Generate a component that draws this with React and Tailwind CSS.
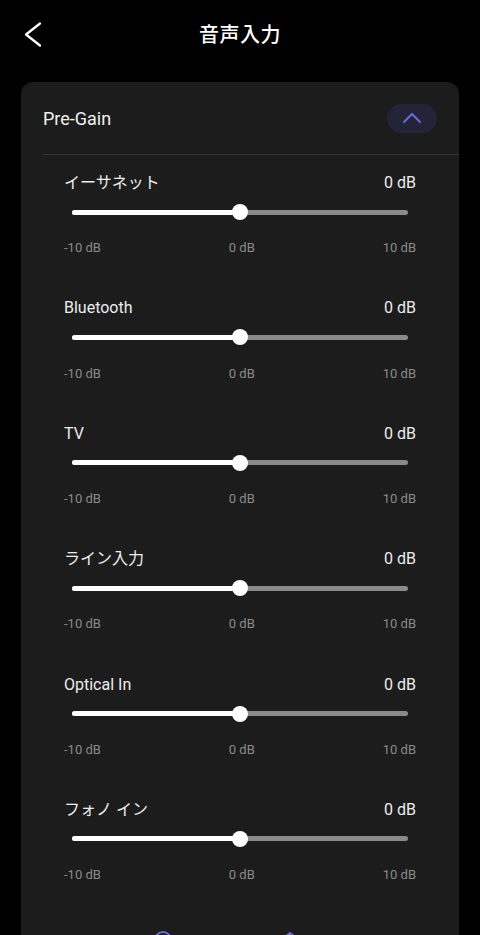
const inputs = ['イーサネット', 'Bluetooth', 'TV', 'ライン入力', 'Optical In', 'フォノ イン'];

function GainRow({ label, value = 0 }) {
    // value in dB, -10..10
    const pct = ((value + 10) / 20) * 100;
    return (
        <div className="pb-[40.4px]">
            <div className="flex h-6 items-center justify-between text-[16px] text-[#ececec]">
                <span>{label}</span>
                <span>{value} dB</span>
            </div>
            <div className="relative mx-2 h-[34px]">
                <div className="absolute left-0 right-0 top-[14.5px] h-[5px] rounded-full bg-[#8a8a8a]" />
                <div
                    className="absolute left-0 top-[14.5px] h-[5px] rounded-full bg-white"
                    style={{ width: `${pct}%` }}
                />
                <div
                    className="absolute top-[9px] h-4 w-4 -translate-x-1/2 rounded-full bg-white"
                    style={{ left: `${pct}%` }}
                />
            </div>
            <div className="mt-[11px] flex h-4 items-center justify-between text-[13px] text-[#8a8a8a]">
                <span>-10 dB</span>
                <span>0 dB</span>
                <span>10 dB</span>
            </div>
        </div>
    );
}

export default function App() {
    return (
        <div
            className="min-h-screen bg-black text-white"
            style={{ fontFamily: 'Roboto, "Noto Sans CJK JP", sans-serif' }}
        >
            {/* Header */}
            <div className="relative flex h-[70px] items-center justify-center">
                <button className="absolute left-[22px] top-[21px] text-white">
                    <svg width="22" height="28" viewBox="0 0 22 28" fill="none">
                        <polyline
                            points="18,2.5 4,13.5 18,24.5"
                            stroke="currentColor"
                            strokeWidth="2.3"
                            strokeLinecap="round"
                            strokeLinejoin="round"
                        />
                    </svg>
                </button>
                <h1 className="text-[20px] font-medium tracking-wide">音声入力</h1>
            </div>

            {/* Card */}
            <div className="mx-[21px] mt-3 overflow-hidden rounded-xl bg-[#1c1c1c]">
                <div className="flex h-[72px] items-center justify-between px-[22px]">
                    <span className="text-[18px] text-[#f0f0f0]">Pre-Gain</span>
                    <button className="flex h-[29px] w-[50px] items-center justify-center rounded-full bg-[#23233a] text-[#6b6bd8]">
                        <svg width="20" height="12" viewBox="0 0 20 12" fill="none">
                            <polyline
                                points="2,10 10,2 18,10"
                                stroke="currentColor"
                                strokeWidth="2"
                                strokeLinecap="round"
                                strokeLinejoin="round"
                            />
                        </svg>
                    </button>
                </div>
                <div className="ml-[22px] border-t border-[#333333]" />

                <div className="px-[43px] pt-[16px]">
                    {inputs.map((name) => (
                        <GainRow key={name} label={name} />
                    ))}
                </div>

                <div className="flex items-start pb-6 pt-2 text-[#6b6bd8]">
                    <div className="ml-[133px] h-[18px] w-[18px] rounded-full border-2 border-[#6b6bd8]" />
                    <svg className="ml-[110px]" width="16" height="18" viewBox="0 0 16 18" fill="none">
                        <path d="M8 2 L8 16 M3 6 L8 2 L13 6" stroke="currentColor" strokeWidth="2" strokeLinecap="round" />
                    </svg>
                </div>
            </div>
        </div>
    );
}
